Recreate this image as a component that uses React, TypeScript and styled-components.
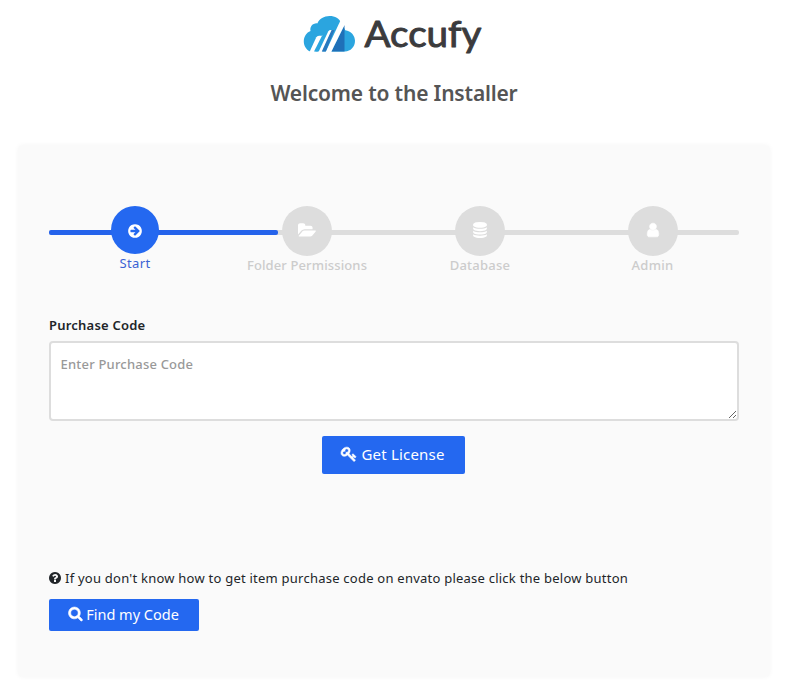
import React from 'react';
import styled, { createGlobalStyle } from 'styled-components';

const GlobalStyle = createGlobalStyle`
  * { box-sizing: border-box; }
  body {
    margin: 0;
    background: #fff;
    color: #212529;
    font-family: 'Noto Sans', 'Open Sans', sans-serif;
  }
`;

const Page = styled.div`
  height: 698px;
  overflow: hidden;
  display: flex;
  flex-direction: column;
  align-items: center;
`;

const Logo = styled.svg`
  display: block;
  width: 190px;
  height: 52px;
  margin: 8px 0 0 2px;
  flex: none;
`;

const Title = styled.h1<{ $track: number }>`
  margin: 18px 0 0 2px;
  height: 30px;
  line-height: 30px;
  font-size: 21px;
  font-weight: 600;
  letter-spacing: ${(p) => p.$track}px;
  color: #555;
  white-space: nowrap;
`;

const Card = styled.main`
  width: 752px;
  height: 532px;
  margin: 37px 0 0 2px;
  padding: 61px 31px 0;
  border-radius: 5px;
  background: #fafafa;
  box-shadow: 0 0 5px rgba(0, 0, 0, 0.045);
  display: flex;
  flex-direction: column;
  flex: none;
`;

const Steps = styled.div`
  position: relative;
  display: grid;
  grid-template-columns: 172px 172px 174px 171px;
  height: 70px;
`;

const Track = styled.div<{ $active?: boolean }>`
  position: absolute;
  left: 0;
  top: 24px;
  width: ${(p) => (p.$active ? '229px' : '100%')};
  height: 5px;
  border-radius: 2px;
  background: ${(p) => (p.$active ? '#2563eb' : '#ddd')};
`;

const Step = styled.div<{ $active?: boolean }>`
  position: relative;
  display: flex;
  flex-direction: column;
  align-items: center;
  color: ${(p) => (p.$active ? '#3a62d4' : '#ccc')};
`;

const Circle = styled.div<{ $active?: boolean }>`
  width: ${(p) => (p.$active ? 48 : 50)}px;
  height: ${(p) => (p.$active ? 48 : 50)}px;
  border-radius: 50%;
  background: ${(p) => (p.$active ? '#2468f0' : '#ddd')};
  color: #fff;
  display: flex;
  align-items: center;
  justify-content: center;
  padding: ${(p) => (p.$active ? '2px 0 0' : '0 0 2px')};
`;

const StepLabel = styled.span<{ $track: number; $weight: number }>`
  height: 19px;
  line-height: 19px;
  font-size: 13px;
  font-weight: ${(p) => p.$weight};
  letter-spacing: ${(p) => p.$track}px;
  white-space: nowrap;
`;

const Label = styled.label`
  margin-top: 39px;
  height: 20px;
  line-height: 20px;
  font-size: 13px;
  font-weight: 600;
  letter-spacing: 0.22px;
`;

const CodeInput = styled.textarea`
  display: block;
  width: 100%;
  height: 80px;
  margin: 6px 0 0;
  padding: 10px 9.5px;
  border: 2px solid #ddd;
  border-radius: 4px;
  background: #fff;
  font: 500 13px/22px 'Noto Sans', sans-serif;
  letter-spacing: 0.2px;
  resize: vertical;
  &::placeholder { color: #999; opacity: 1; }
`;

const Button = styled.button<{ $wide?: boolean }>`
  display: flex;
  align-items: center;
  justify-content: center;
  gap: ${(p) => (p.$wide ? 4 : 3)}px;
  align-self: ${(p) => (p.$wide ? 'center' : 'flex-start')};
  width: ${(p) => (p.$wide ? 143 : 150)}px;
  height: ${(p) => (p.$wide ? 38 : 32)}px;
  margin: ${(p) => (p.$wide ? '15px 0 0 -1px' : '10px 0 0')};
  padding: 0 1px 3px 0;
  border: 0;
  border-radius: 2px;
  background: #2468f0;
  color: #fff;
  font-family: 'Noto Sans', sans-serif;
  font-size: ${(p) => (p.$wide ? 15 : 14.5)}px;
  letter-spacing: ${(p) => (p.$wide ? 0.2 : 0)}px;
  white-space: nowrap;
`;

const Help = styled.p`
  display: flex;
  align-items: center;
  gap: 4px;
  height: 22px;
  margin: 93px 0 0;
  font-size: 13px;
  line-height: 22px;
  white-space: nowrap;
`;

const HelpText = styled.span`
  letter-spacing: 0.235px;
`;

const disc =
  'm0 0q0 209-103 385.5t-279.5 279.5-385.5 103-385.5-103-279.5-279.5-103-385.5 103-385.5 279.5-279.5 385.5-103 385.5 103 279.5 279.5 103 385.5z';

const icons = {
  arrow:
    'M1413 896q0-27-18-45l-91-91-362-362q-18-18-45-18t-45 18l-91 91q-18 18-18 45t18 45l189 189h-502q-26 0-45 19t-19 45v128q0 26 19 45t45 19h502l-189 189q-19 19-19 45t19 45l91 91q18 18 45 18t45-18l362-362 91-91q18-18 18-45zM1664 896' + disc,
  folder:
    'M1879 952q0 31-31 66l-336 396q-43 51-120.5 86.5t-143.5 35.5h-1088q-34 0-60.5-13t-26.5-43q0-31 31-66l336-396q43-51 120.5-86.5t143.5-35.5h1088q34 0 60.5 13t26.5 43zm-343-344v160h-832q-94 0-197 47.5t-164 119.5l-337 396-5 6q0-4-.5-12.5t-.5-12.5v-960q0-92 66-158t158-66h320q92 0 158 66t66 158v32h544q92 0 158 66t66 158z',
  database:
    'M896 768q237 0 443-43t325-127v170q0 69-103 128t-280 93.5-385 34.5-385-34.5-280-93.5-103-128v-170q119 84 325 127t443 43zm0 768q237 0 443-43t325-127v170q0 69-103 128t-280 93.5-385 34.5-385-34.5-280-93.5-103-128v-170q119 84 325 127t443 43zm0-384q237 0 443-43t325-127v170q0 69-103 128t-280 93.5-385 34.5-385-34.5-280-93.5-103-128v-170q119 84 325 127t443 43zm0-1152q208 0 385 34.5t280 93.5 103 128v128q0 69-103 128t-280 93.5-385 34.5-385-34.5-280-93.5-103-128v-128q0-69 103-128t280-93.5 385-34.5z',
  user:
    'M1536 1399q0 109-62.5 187t-150.5 78h-854q-88 0-150.5-78t-62.5-187q0-85 8.5-160.5t31.5-152 58.5-131 94-89 134.5-34.5q131 128 313 128t313-128q76 0 134.5 34.5t94 89 58.5 131 31.5 152 8.5 160.5zm-256-887q0 159-112.5 271.5t-271.5 112.5-271.5-112.5-112.5-271.5 112.5-271.5 271.5-112.5 271.5 112.5 112.5 271.5z',
  key:
    'M832 512q0-80-56-136t-136-56-136 56-56 136q0 42 19 83-41-19-83-19-80 0-136 56t-56 136 56 136 136 56 136-56 56-136q0-42-19-83 41 19 83 19 80 0 136-56t56-136zm851 704q0 17-49 66t-66 49q-9 0-28.5-16t-36.5-33-38.5-40-24.5-26l-96 96 220 220q28 28 28 68 0 42-39 81t-81 39q-40 0-68-28l-671-671q-176 131-365 131-163 0-265.5-102.5t-102.5-265.5q0-160 95-313t248-248 313-95q163 0 265.5 102.5t102.5 265.5q0 189-131 365l355 355 96-96q-3-3-26-24.5t-40-38.5-33-36.5-16-28.5q0-17 49-66t66-49q13 0 23 10 6 6 46 44.5t82 79.5 86.5 86 73 78 28.5 41z',
  question:
    'M1024 1376v-192q0-14-9-23t-23-9h-192q-14 0-23 9t-9 23v192q0 14 9 23t23 9h192q14 0 23-9t9-23zm256-672q0-88-55.5-163t-138.5-116-170-41q-243 0-371 213-15 24 8 42l132 100q7 6 19 6 16 0 25-12 53-68 86-92 34-24 86-24 48 0 85.5 26t37.5 59q0 38-20 61t-68 45q-63 28-115.5 86.5t-52.5 125.5v36q0 14 9 23t23 9h192q14 0 23-9t9-23q0-19 21.5-49.5t54.5-49.5q32-18 49-28.5t46-35 44.5-48 28-60.5 12.5-81zM1664 896' + disc,
  search:
    'M1216 832q0-185-131.5-316.5t-316.5-131.5-316.5 131.5-131.5 316.5 131.5 316.5 316.5 131.5 316.5-131.5 131.5-316.5zm512 832q0 52-38 90t-90 38q-54 0-90-38l-343-342q-179 124-399 124-143 0-273.5-55.5t-225-150-150-225-55.5-273.5 55.5-273.5 150-225 225-150 273.5-55.5 273.5 55.5 225 150 150 225 55.5 273.5q0 220-124 399l343 343q37 37 37 90z',
};

const IconSvg = styled.svg<{ $bold?: boolean }>`
  flex: none;
  overflow: visible;
  fill: currentColor;
  fill-rule: evenodd;
  stroke: currentColor;
  stroke-width: ${(p) => (p.$bold ? 70 : 0)};
`;

type IconProps = { name: keyof typeof icons; size: number; left?: number; width?: number; bold?: boolean };

const Icon = ({ name, size, left = 0, width = 1792, bold }: IconProps) => (
  <IconSvg
    $bold={bold}
    width={(size * width) / 1792}
    height={size}
    viewBox={`${left} 0 ${width} 1792`}
    aria-hidden="true"
  >
    <path d={icons[name]} />
  </IconSvg>
);

export default function App() {
  return (
    <>
      <GlobalStyle />
      <Page>
        <Logo viewBox="299 8 190 52" role="img" aria-label="Accufy">
          <path
            d="M310 51.5C306 49.5 303.8 45.8 303.8 41.5C303.8 36.5 306.5 32.5 310.5 31C309.6 26.8 312.8 23 317.3 23.4C319.4 18.8 324 16 329.5 16C335.2 16 339.2 18.6 341.4 23L345.3 30.2C351 31 355 35.5 355 40.8C355 46.8 350.6 51.5 345 51.5Z"
            fill="#2ba5df"
          />
          <path d="M344.5 25V51.5H331.5Z" fill="#1f70b8" />
          <g fill="#fff">
            <path d="M309.5 52L316.3 37.2Q317 35.7 319 35.7H323L315.2 52Z" />
            <path d="M318.5 52L328.2 31.4Q329 30 331 30H332.2L322.2 52Z" />
            <path d="M325.6 52L340.7 20L345.5 23L331.2 52Z" />
          </g>
          <path d="M314 51.5L322 35.7H325L317.7 51.5Z" fill="#2ba5df" />
          <path d="M321.8 51.5L331.6 30H334.5L325.8 51.5Z" fill="#2878be" />
          <text
            x="364.5"
            y="47"
            fontFamily="Lato"
            fontWeight="400"
            fontSize="37.5"
            fill="#3b3b3d"
            stroke="#3b3b3d"
            strokeWidth="1"
            strokeLinejoin="round"
            textLength="117"
            lengthAdjust="spacingAndGlyphs"
          >
            Accufy
          </text>
        </Logo>
        <Title $track={-0.18}>Welcome to the Installer</Title>
        <Card>
          <Steps>
            <Track />
            <Track $active />
            <Step $active>
              <Circle $active><Icon name="arrow" size={16} /></Circle>
              <StepLabel $track={0.4} $weight={400}>Start</StepLabel>
            </Step>
            <Step>
              <Circle><Icon name="folder" size={17} width={1900} /></Circle>
              <StepLabel $track={0.12} $weight={500}>Folder Permissions</StepLabel>
            </Step>
            <Step>
              <Circle><Icon name="database" size={16} /></Circle>
              <StepLabel $track={0.25} $weight={500}>Database</StepLabel>
            </Step>
            <Step>
              <Circle><Icon name="user" size={16} bold /></Circle>
              <StepLabel $track={0.3} $weight={500}>Admin</StepLabel>
            </Step>
          </Steps>
          <Label htmlFor="code">Purchase Code</Label>
          <CodeInput id="code" placeholder="Enter Purchase Code" />
          <Button $wide><Icon name="key" size={16} bold />Get License</Button>
          <Help>
            <Icon name="question" size={14} left={128} width={1536} />
            <HelpText>If you don't know how to get item purchase code on envato please click the below button</HelpText>
          </Help>
          <Button><Icon name="search" size={15} bold />Find my Code</Button>
        </Card>
      </Page>
    </>
  );
}
